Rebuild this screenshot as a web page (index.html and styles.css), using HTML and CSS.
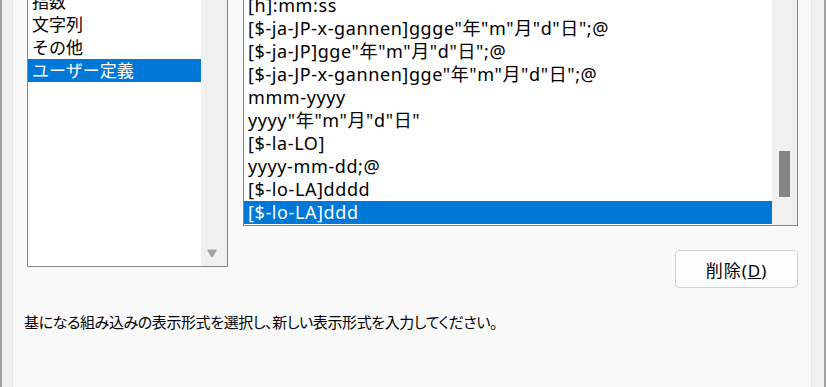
FILE: index.html
```html
<!DOCTYPE html>
<html lang="ja">
<head>
<meta charset="utf-8">
<link rel="stylesheet" href="styles.css">
</head>
<body>
<div class="edge"></div>
<div class="gutter-l"></div>
<main class="panel">
  <div class="top">
    <div class="listbox cat">
      <ul class="items">
        <li>分数</li>
        <li>指数</li>
        <li>文字列</li>
        <li>その他</li>
        <li class="sel">ユーザー定義</li>
        <li></li>
      </ul>
      <div class="track track-end">
        <svg class="arrow" width="10" height="9" viewBox="0 0 10 9"><path d="M0.5 0.5 H9.5 V2 L5.8 8 H4.2 L0.5 2 Z" fill="#a3a3a3"/></svg>
      </div>
    </div>
    <div class="right">
      <div class="listbox fmt">
        <ul class="items">
          <li>@</li>
          <li>[h]:mm:ss</li>
          <li>[$-ja-JP-x-gannen]ggge"年"m"月"d"日";@</li>
          <li>[$-ja-JP]gge"年"m"月"d"日";@</li>
          <li>[$-ja-JP-x-gannen]gge"年"m"月"d"日";@</li>
          <li>mmm-yyyy</li>
          <li>yyyy"年"m"月"d"日"</li>
          <li>[$-la-LO]</li>
          <li>yyyy-mm-dd;@</li>
          <li>[$-lo-LA]dddd</li>
          <li class="sel">[$-lo-LA]ddd</li>
        </ul>
        <div class="track">
          <div class="thumb"></div>
        </div>
      </div>
      <div class="btn-row">
        <button class="btn" type="button">削除(<u>D</u>)</button>
      </div>
    </div>
  </div>
  <p class="desc">基になる組み込みの表示形式を選択し、新しい表示形式を入力してください。</p>
</main>
<div class="gutter-r"></div>
<div class="edge"></div>
</body>
</html>
```
FILE: styles.css
```css
html, body {
  margin: 0;
  padding: 0;
}
body {
  width: 826px;
  height: 387px;
  overflow: hidden;
  display: flex;
  background: #f0f0f0;
  font-family: "Noto Sans", "Noto Sans CJK JP", sans-serif;
  font-size: 17px;
  color: #000;
}
.edge {
  width: 2px;
  background: #a0a0a0;
  flex: none;
}
.gutter-l {
  width: 10px;
  flex: none;
}
.gutter-r {
  width: 12px;
  flex: none;
}
.panel {
  flex: none;
  background: #f9f9f9;
  border-left: 1px solid #e4e4e4;
  border-right: 1px solid #e4e4e4;
  padding: 0 13px 0 14px;
  box-sizing: content-box;
  width: 771px;
}
.top {
  display: flex;
  gap: 15px;
  margin-top: -34px;
  align-items: flex-start;
}
.listbox {
  display: flex;
  background: #fff;
  border: 1px solid #828790;
  box-sizing: border-box;
  overflow: hidden;
}
.cat {
  width: 201px;
  height: 301px;
  flex: none;
}
.right {
  display: flex;
  flex-direction: column;
  margin-top: 4px;
  width: 555px;
}
.fmt {
  width: 555px;
  height: 256px;
}
.items {
  list-style: none;
  margin: 0;
  padding: 0;
  flex: 1;
  min-width: 0;
}
.items li {
  height: 23px;
  line-height: 23px;
  padding-left: 4px;
  white-space: nowrap;
}
.fmt .items li {
  font-size: 18px;
  letter-spacing: 0.6px;
}
.items li.sel {
  background: #0078d7;
  color: #fff;
}
.track {
  width: 26px;
  flex: none;
  background: #f0f0f0;
  display: flex;
  flex-direction: column;
}
.fmt .track {
  width: 25px;
}
.track-end {
  justify-content: flex-end;
  padding-bottom: 8px;
  box-sizing: border-box;
}
.arrow {
  display: block;
  margin-left: 6px;
}
.thumb {
  margin-top: 180px;
  margin-left: 7px;
  width: 11px;
  height: 46px;
  background: #858585;
}
.btn-row {
  display: flex;
  justify-content: flex-end;
  margin-top: 24px;
}
.btn {
  width: 123px;
  height: 38px;
  border: 1px solid #d0d0d0;
  border-radius: 4px;
  background: #fdfdfd;
  font: inherit;
  color: #000;
  padding: 0;
  letter-spacing: 1px;
}
.desc {
  margin: 23px 0 0 -3px;
  line-height: 22px;
  font-family: "Noto Sans CJK JP", sans-serif;
  font-size: 15px;
  letter-spacing: -0.4px;
  font-feature-settings: "palt";
}
```
